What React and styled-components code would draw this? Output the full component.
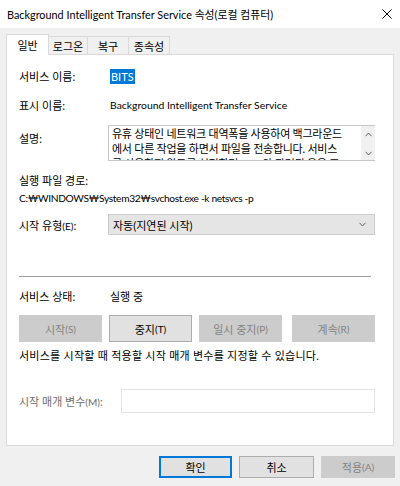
import React from "react";
import styled, { createGlobalStyle } from "styled-components";

const Global = createGlobalStyle`
  html, body { margin: 0; padding: 0; background: #f0f0f0; }
  body { font-family: "Lato", "Noto Sans CJK KR", sans-serif; }
`;

const FONT = `"Lato", "Noto Sans CJK KR", sans-serif`;

const Window = styled.div`
  width: 400px;
  height: 486px;
  background: #f0f0f0;
  display: flex;
  flex-direction: column;
  font-family: ${FONT};
  font-size: 11px;
  color: #000;
  overflow: hidden;
`;

const TitleBar = styled.div`
  height: 28px;
  background: #fff;
  display: flex;
  align-items: center;
  padding: 0 7px;
  flex-shrink: 0;
`;

const Title = styled.div`
  flex: 1;
  font-size: 10.85px;
  white-space: nowrap;
  color: #000;
`;

const Close = styled.div`
  width: 10px;
  height: 10px;
  margin-right: 1px;
  display: flex;
`;

const TabStrip = styled.div`
  display: flex;
  align-items: flex-end;
  height: 26px;
  padding-left: 6px;
  flex-shrink: 0;
`;

const Tab = styled.div`
  height: ${(p) => (p.$active ? 21 : 18)}px;
  width: ${(p) => p.$w}px;
  box-sizing: border-box;
  display: flex;
  align-items: center;
  justify-content: center;
  background: ${(p) => (p.$active ? "#fff" : "#f0f0f0")};
  border: 1px solid #d9d9d9;
  border-bottom: none;
  margin-left: ${(p) => (p.$active ? 0 : -1)}px;
  margin-bottom: ${(p) => (p.$active ? -1 : 0)}px;
  position: relative;
  z-index: ${(p) => (p.$active ? 2 : 1)};
  font-size: 11px;
`;

const Panel = styled.div`
  margin: 0 6px;
  height: 392px;
  box-sizing: border-box;
  background: #fff;
  border: 1px solid #d9d9d9;
  padding: 0 18px 0 12px;
  display: flex;
  flex-direction: column;
  flex-shrink: 0;
`;

const Row = styled.div`
  display: flex;
  align-items: ${(p) => p.$align || "center"};
  margin-top: ${(p) => p.$mt || 0}px;
  min-height: 15px;
`;

const Label = styled.div`
  width: ${(p) => (p.$auto ? "auto" : "89px")};
  flex-shrink: 0;
  white-space: nowrap;
  color: ${(p) => (p.$disabled ? "#6d6d6d" : "#000")};
  padding-top: ${(p) => p.$pt || 0}px;
`;

const Small = styled.span`
  font-size: 10px;
`;

const Value = styled.div`
  white-space: nowrap;
  padding-left: 2px;
  font-size: ${(p) => p.$size || 11}px;
`;

const Selected = styled.span`
  background: #0078d7;
  color: #fff;
  padding: 1px 1px;
`;

const TextArea = styled.div`
  flex: 1;
  height: 36px;
  box-sizing: border-box;
  border: 1px solid #c8c8c8;
  border-right: none;
  display: flex;
  overflow: hidden;
`;

const TextLines = styled.div`
  flex: 1;
  padding: 0 3px;
  line-height: 15px;
  overflow: hidden;
  letter-spacing: -0.25px;
`;

const Line = styled.div`
  white-space: nowrap;
`;

const ScrollBar = styled.div`
  width: 14px;
  background: #f0f0f0;
  display: flex;
  flex-direction: column;
  justify-content: space-between;
  align-items: center;
  padding: 6px 0 4px;
  box-sizing: border-box;
`;

const Path = styled.div`
  white-space: nowrap;
  margin-top: 3px;
  line-height: 15px;
  font-family: "Lato", "Noto Sans", sans-serif;
  font-size: 10.2px;
  letter-spacing: -0.35px;
`;

const Select = styled.div`
  flex: 1;
  height: 21px;
  box-sizing: border-box;
  background: #e5e5e5;
  border: 1px solid #cccccc;
  display: flex;
  align-items: center;
  justify-content: space-between;
  padding: 0 8px 0 4px;
`;

const Separator = styled.div`
  height: 1px;
  background: #a0a0a0;
  margin-top: 41px;
  margin-right: 4px;
`;

const ButtonRow = styled.div`
  display: flex;
  gap: 7px;
  margin-top: 11px;
`;

const Btn = styled.div`
  width: ${(p) => p.$w || 83}px;
  height: ${(p) => p.$h || 27}px;
  margin-left: ${(p) => p.$ml || 0}px;
  box-sizing: border-box;
  display: flex;
  align-items: center;
  justify-content: center;
  background: ${(p) => (p.$disabled ? "#cccccc" : "#e1e1e1")};
  border: ${(p) =>
    p.$default ? "2px solid #0078d7" : p.$disabled ? "1px solid #cccccc" : "1px solid #adadad"};
  color: ${(p) => (p.$disabled ? "#838383" : "#000")};
  white-space: nowrap;
`;

const Info = styled.div`
  margin-top: 6px;
  white-space: nowrap;
  line-height: 15px;
  letter-spacing: 0.25px;
`;

const Input = styled.div`
  flex: 1;
  height: 24px;
  box-sizing: border-box;
  border: 1px solid #e3e3e3;
  background: #fff;
  margin-left: 18px;
`;

const Footer = styled.div`
  display: flex;
  justify-content: flex-end;
  gap: 7px;
  padding: 10px 5px 0 0;
`;

const Chevron = ({ up }) => (
  <svg width="7" height="5" viewBox="0 0 7 5">
    <path
      d={up ? "M0.5 4.2 L3.5 1 L6.5 4.2" : "M0.5 0.8 L3.5 4 L6.5 0.8"}
      fill="none"
      stroke="#606060"
      strokeWidth="1"
    />
  </svg>
);

export default function App() {
  return (
    <>
      <Global />
      <Window>
        <TitleBar>
          <Title>Background Intelligent Transfer Service 속성(로컬 컴퓨터)</Title>
          <Close>
            <svg width="10" height="10" viewBox="0 0 10 10">
              <path d="M0.5 0.5 L9.5 9.5 M9.5 0.5 L0.5 9.5" stroke="#000" strokeWidth="1" />
            </svg>
          </Close>
        </TitleBar>
        <TabStrip>
          <Tab $active $w={43}>일반</Tab>
          <Tab $w={40}>로그온</Tab>
          <Tab $w={42}>복구</Tab>
          <Tab $w={42}>종속성</Tab>
        </TabStrip>
        <Panel>
          <Row $mt={13}>
            <Label>서비스 이름:</Label>
            <Value>
              <Selected>BITS</Selected>
            </Value>
          </Row>
          <Row $mt={13}>
            <Label>표시 이름:</Label>
            <Value $size={10.4}>Background Intelligent Transfer Service</Value>
          </Row>
          <Row $mt={12} $align="flex-start">
            <Label $pt={5}>설명:</Label>
            <TextArea>
              <TextLines>
                <Line>유휴 상태인 네트워크 대역폭을 사용하여 백그라운드</Line>
                <Line>에서 다른 작업을 하면서 파일을 전송합니다. 서비스</Line>
                <Line>를 사용하지 않도록 설정하면 BITS와 관련된 응용 프</Line>
              </TextLines>
              <ScrollBar>
                <Chevron up />
                <Chevron />
              </ScrollBar>
            </TextArea>
          </Row>
          <Row $mt={11}>
            <Label>실행 파일 경로:</Label>
          </Row>
          <Path>C:₩WINDOWS₩System32₩svchost.exe -k netsvcs -p</Path>
          <Row $mt={8}>
            <Label>
              시작 유형<Small>(E)</Small>:
            </Label>
            <Select>
              <span>자동(지연된 시작)</span>
              <Chevron />
            </Select>
          </Row>
          <Separator />
          <Row $mt={11}>
            <Label>서비스 상태:</Label>
            <Value>실행 중</Value>
          </Row>
          <ButtonRow>
            <Btn $disabled>
              시작<Small>(S)</Small>
            </Btn>
            <Btn>
              중지<Small>(T)</Small>
            </Btn>
            <Btn $disabled>
              일시 중지<Small>(P)</Small>
            </Btn>
            <Btn $disabled $ml={3}>
              계속<Small>(R)</Small>
            </Btn>
          </ButtonRow>
          <Info>서비스를 시작할 때 적용할 시작 매개 변수를 지정할 수 있습니다.</Info>
          <Row $mt={26}>
            <Label $disabled $auto>
              시작 매개 변수<Small>(M)</Small>:
            </Label>
            <Input />
          </Row>
        </Panel>
        <Footer>
          <Btn $default $w={73} $h={22}>
            확인
          </Btn>
          <Btn $w={75} $h={22}>
            취소
          </Btn>
          <Btn $disabled $w={74} $h={22}>
            적용<Small>(A)</Small>
          </Btn>
        </Footer>
      </Window>
    </>
  );
}
